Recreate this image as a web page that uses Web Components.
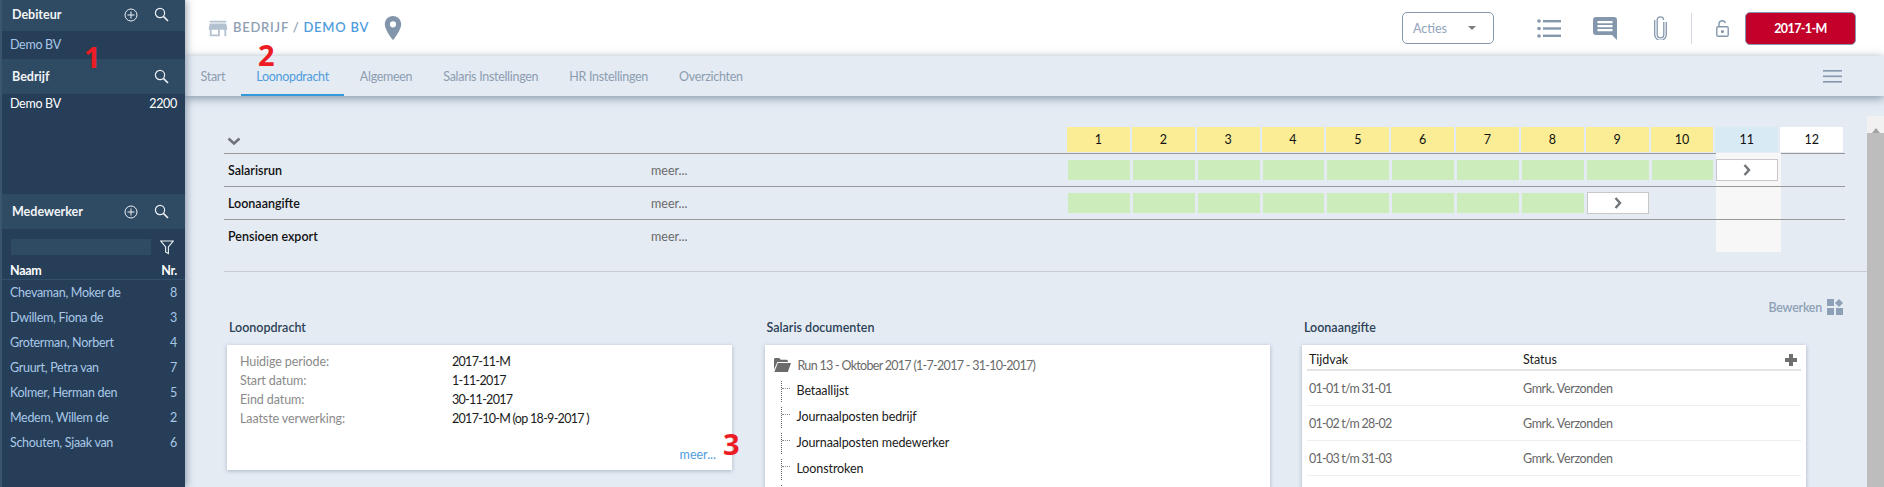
<!DOCTYPE html>
<html lang="nl">
<head>
<meta charset="utf-8">
<title>Loonopdracht</title>
<style>
	html, body { margin: 0; height: 487px; overflow: hidden; }
	body {
		position: relative;
		display: flex;
		font: 12.5px/1.2 Lato, "Liberation Sans", sans-serif;
		background: #e4ebf3;
	}
	main-column { flex: 1; min-width: 0; }
</style>
</head>
<body>
<app-sidebar></app-sidebar>
<main-column>
	<top-bar></top-bar>
	<tab-bar></tab-bar>
	<page-content></page-content>
</main-column>
<mark-number style="left:84px;top:46px">1</mark-number>
<mark-number style="left:258px;top:44px">2</mark-number>
<mark-number style="left:723px;top:433px">3</mark-number>

<script>
const ICONS = {
	plus: '<svg width="14" height="14" viewBox="0 0 14 14" fill="none" stroke="#eef2f6"><circle cx="7" cy="7" r="6"/><path d="M7 3.5v7M3.5 7h7"/></svg>',
	search: '<svg width="15" height="15" viewBox="0 0 15 15" fill="none" stroke="#eef2f6" stroke-width="1.2"><circle cx="6" cy="6" r="4.6"/><path d="M9.4 9.4l4.6 4.6" stroke-width="1.6"/></svg>',
	funnel: '<svg width="14" height="15" viewBox="0 0 14 15" fill="none" stroke="#eef2f6" stroke-width="1.1"><path d="M.8 1h12.4L8.4 7v6.6L5.6 12V7z"/></svg>',
	store: '<svg width="22" height="22" viewBox="0 0 24 24" fill="#b4c1d0"><path d="M21 4H3v2h18zM22 14v-2l-1-5H3l-1 5v2h1v7h11v-7h5v7h2v-7zM12 19H5v-5h7z"/></svg>',
	pin: '<svg width="18" height="24" viewBox="0 0 18 24" fill="#8295ab"><path fill-rule="evenodd" d="M9 0C4 0 .8 3.8.8 8.4.8 14 9 24 9 24s8.200-10 8.200-15.600C17.200 3.800 14 0 9 0zm0 11.400a3.100 3.100 0 1 1 0-6.200 3.100 3.100 0 0 1 0 6.200z"/></svg>',
	list: '<svg width="24" height="19" viewBox="0 0 24 19" fill="#8497ad"><circle cx="2" cy="2" r="1.800"/><circle cx="2" cy="9.500" r="1.800"/><circle cx="2" cy="17" r="1.800"/><rect x="6" y="1" width="18" height="2.400"/><rect x="6" y="8.300" width="18" height="2.400"/><rect x="6" y="15.600" width="18" height="2.400"/></svg>',
	comment: '<svg width="24" height="23" viewBox="0 0 24 23"><path fill="#8497ad" d="M3 0h18a3 3 0 0 1 3 3v20l-5-5H3a3 3 0 0 1-3-3V3a3 3 0 0 1 3-3z"/><path fill="#fff" d="M4.500 4h15v2.200h-15zM4.500 8h15v2.200h-15zM4.500 12h15v2.200h-15z"/></svg>',
	clip: '<svg width="13" height="24" viewBox="0 0 13 24" fill="none" stroke="#8497ad" stroke-width="1.300"><path d="M9.800 6v12.500a3.300 3.300 0 0 1-6.600 0V4a3.200 3.200 0 0 1 6.400 0"/><path d="M12.300 6v12.500a5.800 5.800 0 0 1-11.600 0V4"/></svg>',
	lock: '<svg width="13" height="17" viewBox="0 0 13 17" fill="none" stroke="#8497ad" stroke-width="1.400"><rect x=".8" y="6.800" width="11.400" height="9.400" rx="1.200"/><path d="M3 6.500V4a3.300 3.300 0 0 1 6.500-.8"/><circle cx="6.500" cy="11.500" r=".9" fill="#8497ad"/></svg>',
	burger: '<svg width="19" height="13" viewBox="0 0 19 13" fill="#8497ad"><rect width="19" height="1.600"/><rect y="5.500" width="19" height="1.600"/><rect y="11" width="19" height="1.600"/></svg>',
	down: '<svg width="14" height="9" viewBox="0 0 14 9" fill="none" stroke="#6f7478" stroke-width="2.600"><path d="M1.500 1.500L7 6.500l5.500-5"/></svg>',
	right: '<svg width="8" height="12" viewBox="0 0 8 12" fill="none" stroke="#6f7478" stroke-width="2.400"><path d="M1.500 1l4.500 5-4.500 5"/></svg>',
	tiles: '<svg width="16" height="16" viewBox="0 0 16 16" fill="#8ea0b5"><rect width="7" height="7"/><path d="M12 0l4 4-4 4-4-4z"/><rect y="9" width="7" height="7"/><rect x="9" y="9" width="7" height="7"/></svg>',
	folder: '<svg width="17" height="14" viewBox="0 0 17 14" fill="#6b6b6b"><path d="M0 1.500C0 .7.600 0 1.400 0h3.800l1.600 1.800h5.800c.7 0 1.300.6 1.300 1.300V4H3.400L0 11.500z"/><path d="M3.800 5H17l-3.200 9H.4z"/></svg>',
	cross: '<svg width="12" height="12" viewBox="0 0 12 12" fill="#6f6f6f"><path d="M4 0h4v4h4v4H8v4H4V8H0V4h4z"/></svg>'
};

class AppSidebar extends HTMLElement {
	constructor() {
		super();
		const names = [
			['Chevaman, Moker de', 8],
			['Dwillem, Fiona de', 3],
			['Groterman, Norbert', 4],
			['Gruurt, Petra van', 7],
			['Kolmer, Herman den', 5],
			['Medem, Willem de', 2],
			['Schouten, Sjaak van', 6]
		];
		this.attachShadow({ mode: 'open' }).innerHTML = `
			<style>
				:host {
					display: block;
					position: relative;
					z-index: 3;
					width: 183px;
					height: 487px;
					flex: none;
					border-left: 2px solid #3b556e;
					background: #263e57;
					color: #a9c8e8;
					box-shadow: 2px 0 7px rgba(50, 70, 100, .45);
				}
				.head {
					display: flex;
					align-items: center;
					height: 35px;
					padding: 0 16px 0 10px;
					box-sizing: border-box;
					background: #2f4a63;
					color: #f2f5f8;
					font-weight: 700;
				}
				.head span { flex: 1; }
				.head svg { display: block; margin-left: 16px; }
				.head.first { height: 31px; padding-bottom: 2px; }
				.row {
					display: flex;
					justify-content: space-between;
					padding: 0 8px;
					letter-spacing: -.3px;
				}
				.debiteur { height: 28px; padding-bottom: 2px; box-sizing: border-box; align-items: center; }
				.bedrijf { height: 100px; padding-top: 2px; box-sizing: border-box; color: #fff; }
				.filter { display: flex; align-items: center; box-sizing: border-box; padding: 10px 10px 0 9px; height: 26px; }
				.filter i { display: block; width: 140px; height: 16px; background: #2f4a63; margin-right: 9px; }
				.cols {
					margin-top: 6px;
					height: 18px;
					align-items: center;
					color: #fff;
					font-weight: 700;
					border-bottom: 1px solid #33506b;
				}
				.person { height: 25px; align-items: center; }
			</style>
			<div class="head first"><span>Debiteur</span>${ICONS.plus}${ICONS.search}</div>
			<div class="row debiteur">Demo BV</div>
			<div class="head"><span>Bedrijf</span>${ICONS.search}</div>
			<div class="row bedrijf"><span>Demo BV</span><span>2200</span></div>
			<div class="head"><span>Medewerker</span>${ICONS.plus}${ICONS.search}</div>
			<div class="filter"><i></i>${ICONS.funnel}</div>
			<div class="row cols"><span>Naam</span><span>Nr.</span></div>
			${names
				.map(
					([name, nr]) =>
						`<div class="row person"><span>${name}</span><span>${nr}</span></div>`
				)
				.join('')}
		`;
	}
}

class TopBar extends HTMLElement {
	constructor() {
		super();
		this.attachShadow({ mode: 'open' }).innerHTML = `
			<style>
				:host {
					display: flex;
					align-items: center;
					height: 56px;
					background: #fff;
					padding-left: 22px;
					padding-right: 28px;
				}
				svg { display: block; flex: none; }
				.title {
					margin-left: 4px;
					font-size: 13px;
					font-weight: 600;
					letter-spacing: .75px;
					color: #8f9fb3;
				}
				.title b { color: #4f9ddc; font-weight: 600; }
				.pin { margin-left: 15px; margin-right: auto; }
				.acties {
					display: flex;
					align-items: center;
					justify-content: space-between;
					box-sizing: border-box;
					width: 92px;
					height: 32px;
					padding: 0 17px 0 10px;
					border: 1px solid #8497ad;
					border-radius: 5px;
					color: #8fa3bb;
				}
				.acties i {
					border: 4px solid transparent;
					border-top: 4px solid #7c7c7c;
					border-bottom: 0;
				}
				.list { margin-left: 43px; }
				.comment { margin-left: 32px; }
				.clip { margin-left: 37px; }
				.sep { width: 1px; height: 31px; background: #d5dbe2; margin-left: 24px; }
				.lock { margin-left: 24px; }
				.period {
					display: flex;
					align-items: center;
					justify-content: center;
					box-sizing: border-box;
					width: 111px;
					height: 33px;
					margin-left: 16px;
					border: 1px solid #8497ad;
					border-radius: 5px;
					background: #c2002a;
					color: #fff;
					font-weight: 700;
					letter-spacing: -.6px;
				}
			</style>
			<span>${ICONS.store}</span>
			<span class="title">BEDRIJF / <b>DEMO BV</b></span>
			<span class="pin">${ICONS.pin}</span>
			<div class="acties">Acties<i></i></div>
			<span class="list">${ICONS.list}</span>
			<span class="comment">${ICONS.comment}</span>
			<span class="clip">${ICONS.clip}</span>
			<span class="sep"></span>
			<span class="lock">${ICONS.lock}</span>
			<div class="period">2017-1-M</div>
		`;
	}
}

class TabBar extends HTMLElement {
	constructor() {
		super();
		const tabs = ['Start', 'Loonopdracht', 'Algemeen', 'Salaris Instellingen', 'HR Instellingen', 'Overzichten'];
		this.attachShadow({ mode: 'open' }).innerHTML = `
			<style>
				:host {
					display: flex;
					position: relative;
					z-index: 2;
					height: 40px;
					background: #e4ebf3;
					box-shadow: 0 2px 9px rgba(60, 85, 115, .6);
				}
				a {
					display: flex;
					align-items: center;
					box-sizing: border-box;
					height: 40px;
					padding: 0 15.5px;
					color: #8d9db1;
					letter-spacing: -.3px;
				}
				a:first-child { padding-left: 15px; }
				a.active {
					color: #4f9ddc;
					border-bottom: 2px solid #3498db;
					padding-top: 2px;
				}
				.menu { margin-left: auto; margin-right: 42px; align-self: center; }
				.menu svg { display: block; }
			</style>
			${tabs
				.map((tab, i) => `<a class="${i === 1 ? 'active' : ''}">${tab}</a>`)
				.join('')}
			<span class="menu">${ICONS.burger}</span>
		`;
	}
}

class RunTable extends HTMLElement {
	constructor() {
		super();
		const periods = Array.from({ length: 12 }, (_, i) => i + 1);
		const heads = periods
			.map((p) => {
				const kind = p === 12 ? 'open' : p === 11 ? 'now' : '';
				return `<div class="head ${kind}">${p}</div>`;
			})
			.join('');
		const row = (label, done) => `
			<div class="grid row">
				<div class="label"><b>${label}</b><span>meer...</span></div>
				${periods
					.map((p) => {
						if (p <= done) return '<div class="cell ok"></div>';
						if (p === done + 1 && done > 0) return `<div class="cell next">${ICONS.right}</div>`;
						return '<div class="cell"></div>';
					})
					.join('')}
			</div>`;
		this.attachShadow({ mode: 'open' }).innerHTML = `
			<style>
				:host { display: block; position: relative; width: 1621px; }
				.grid { display: grid; grid-template-columns: 843px repeat(12, 64.85px); }
				.top { height: 26px; border-bottom: 1px solid #999; box-sizing: content-box; }
				.top svg { display: block; margin: 10px 0 0 3px; }
				.head {
					display: flex;
					align-items: center;
					justify-content: center;
					margin-right: 2px;
					height: 25px;
					background: #faed96;
					color: #111;
				}
				.head.now { background: #d8eaf4; }
				.head.open { background: #fff; }
				.row { height: 32px; border-bottom: 1px solid #999; align-items: center; position: relative; }
				.row:last-of-type { border-bottom: 0; }
				.label { display: grid; grid-template-columns: 423px 1fr; padding-left: 4px; color: #6a6a6a; }
				.label b { color: #111; font-weight: 600; }
				.cell { height: 20px; margin: 0 2px 0 1px; }
				.ok { background: #cdecbc; }
				.next {
					display: flex;
					align-items: center;
					justify-content: center;
					box-sizing: border-box;
					background: #fff;
					border: 1px solid #c8c8c8;
					height: 22px;
				}
				.next svg { display: block; }
				.shade {
					position: absolute;
					left: 1491.5px;
					top: 26px;
					width: 65px;
					height: 99px;
					background: #f7f7f8;
				}
			</style>
			<div class="shade"></div>
			<div class="grid top"><div>${ICONS.down}</div>${heads}</div>
			${row('Salarisrun', 10)}
			${row('Loonaangifte', 8)}
			${row('Pensioen export', 0)}
		`;
	}
}

class InfoPanel extends HTMLElement {
	constructor() {
		super();
		this.attachShadow({ mode: 'open' }).innerHTML = `
			<style>
				:host { display: block; min-width: 0; }
				h3 {
					margin: 0 0 9px 2px;
					height: 16px;
					line-height: 16px;
					font-size: 12.5px;
					font-weight: 600;
					color: #2d4257;
				}
				.card {
					background: #fff;
					box-shadow: 0 1px 4px rgba(60, 80, 110, .35);
					box-sizing: border-box;
					height: var(--card-height, 200px);
				}
			</style>
			<h3>${this.getAttribute('title')}</h3>
			<div class="card"><slot></slot></div>
		`;
	}
}

class PayrollSummary extends HTMLElement {
	constructor() {
		super();
		this.attachShadow({ mode: 'open' }).innerHTML = `
			<style>
				:host { display: block; position: relative; height: 100%; padding: 7px 0 0 13px; box-sizing: border-box; }
				dl { display: grid; grid-template-columns: 212px 1fr; grid-auto-rows: 19px; align-items: center; margin: 0; }
				dt { color: #8a8a8a; letter-spacing: -.1px; }
				dd { margin: 0; color: #1a1a1a; letter-spacing: -.7px; }
				a { display: block; margin: 19px 16px 0 0; text-align: right; color: #4f9ddc; }
			</style>
			<dl>
				<dt>Huidige periode:</dt><dd>2017-11-M</dd>
				<dt>Start datum:</dt><dd>1-11-2017</dd>
				<dt>Eind datum:</dt><dd>30-11-2017</dd>
				<dt>Laatste verwerking:</dt><dd>2017-10-M (op 18-9-2017 )</dd>
			</dl>
			<a>meer...</a>
		`;
	}
}

class DocTree extends HTMLElement {
	constructor() {
		super();
		const docs = ['Betaallijst', 'Journaalposten bedrijf', 'Journaalposten medewerker', 'Loonstroken', ''];
		this.attachShadow({ mode: 'open' }).innerHTML = `
			<style>
				:host { display: block; padding: 13px 0 0 9px; }
				.run { display: flex; align-items: center; gap: 7px; height: 14px; color: #6a6a6a; margin-bottom: 9px; letter-spacing: -.7px; }
				.run svg { display: block; }
				.doc {
					position: relative;
					height: 26px;
					line-height: 20px;
					padding-left: 23px;
					color: #1a1a1a;
					letter-spacing: -.1px;
				}
				.doc::before {
					content: "";
					position: absolute;
					left: 7px;
					top: 0;
					height: 21px;
					border-left: 1px dotted #666;
				}
				.doc::after {
					content: "";
					position: absolute;
					left: 8px;
					top: 7px;
					width: 8px;
					border-top: 1px dotted #888;
				}
			</style>
			<div class="run">${ICONS.folder}<span>Run 13 - Oktober 2017 (1-7-2017 - 31-10-2017)</span></div>
			${docs.map((doc) => `<div class="doc">${doc}</div>`).join('')}
		`;
	}
}

class TaxTable extends HTMLElement {
	constructor() {
		super();
		const rows = ['01-01 t/m 31-01', '01-02 t/m 28-02', '01-03 t/m 31-03'];
		this.attachShadow({ mode: 'open' }).innerHTML = `
			<style>
				:host { display: block; padding: 5px 5px 0; }
				.row {
					display: grid;
					grid-template-columns: 214px 1fr auto;
					align-items: center;
					height: 34px;
					padding-left: 2px;
					border-bottom: 1px solid #eceff2;
					color: #666;
				}
				.row.top { height: 19px; border-bottom: 2px solid #e2e5e8; color: #1a1a1a; }
				.top svg { display: block; margin-right: 4px; }
				.row:not(.top) span:first-child { letter-spacing: -.75px; }
				.row:not(.top) span:last-child { letter-spacing: -.35px; }
			</style>
			<div class="row top"><span>Tijdvak</span><span>Status</span>${ICONS.cross}</div>
			${rows
				.map(
					(row) =>
						`<div class="row"><span>${row}</span><span>Gmrk. Verzonden</span></div>`
				)
				.join('')}
		`;
	}
}

class PageContent extends HTMLElement {
	constructor() {
		super();
		this.attachShadow({ mode: 'open' }).innerHTML = `
			<style>
				:host { display: flex; height: 391px; overflow: hidden; }
				.scroll { flex: 1; min-width: 0; padding: 31px 0 0 39px; }
				hr { height: 0; margin: 19px 0 0; border: 0; border-top: 1px solid #c9cdd2; }
				.edit {
					display: flex;
					align-items: center;
					justify-content: flex-end;
					gap: 5px;
					height: 16px;
					margin: 27px 24px 5px 0;
					color: #8ea0b5;
					font-weight: 600;
					letter-spacing: -.25px;
				}
				.edit svg { display: block; }
				.panels {
					display: grid;
					grid-template-columns: 505px 505px 504px;
					column-gap: 32.5px;
					margin-left: 3px;
					--card-height: 125px;
				}
				.tall { --card-height: 300px; }
				.bar { width: 17px; flex: none; margin-top: 20px; background: #bdbdbd; }
				.bar div {
					display: flex;
					justify-content: center;
					padding-top: 6px;
					height: 11px;
					background: #f1f1f1;
				}
				.bar i {
					border: 4px solid transparent;
					border-bottom: 5px solid #a3a3a3;
					border-top: 0;
				}
			</style>
			<div class="scroll">
				<run-table></run-table>
				<hr>
				<div class="edit">Bewerken ${ICONS.tiles}</div>
				<div class="panels">
					<info-panel title="Loonopdracht"><payroll-summary></payroll-summary></info-panel>
					<info-panel class="tall" title="Salaris documenten"><doc-tree></doc-tree></info-panel>
					<info-panel class="tall" title="Loonaangifte"><tax-table></tax-table></info-panel>
				</div>
			</div>
			<div class="bar"><div><i></i></div></div>
		`;
	}
}

class MarkNumber extends HTMLElement {
	constructor() {
		super();
		this.attachShadow({ mode: 'open' }).innerHTML = `
			<style>
				:host {
					position: absolute;
					z-index: 5;
					color: #ed1c24;
					font: 700 29px/22px "Noto Sans", sans-serif;
				}
			</style>
			<slot></slot>
		`;
	}
}

customElements.define('app-sidebar', AppSidebar);
customElements.define('top-bar', TopBar);
customElements.define('tab-bar', TabBar);
customElements.define('run-table', RunTable);
customElements.define('info-panel', InfoPanel);
customElements.define('payroll-summary', PayrollSummary);
customElements.define('doc-tree', DocTree);
customElements.define('tax-table', TaxTable);
customElements.define('page-content', PageContent);
customElements.define('mark-number', MarkNumber);
</script>
</body>
</html>
